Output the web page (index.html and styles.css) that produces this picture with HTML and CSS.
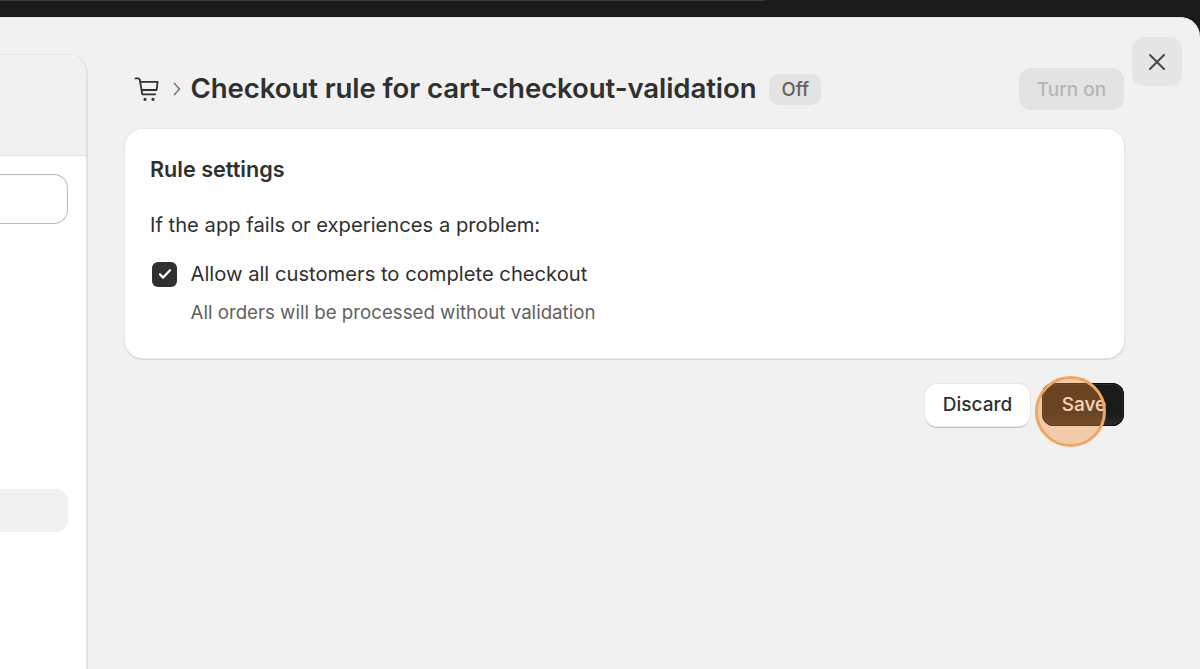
FILE: index.html
```html
<!DOCTYPE html>
<html lang="en">
  <head>
    <meta charset="UTF-8" />
    <meta name="viewport" content="width=device-width, initial-scale=1.0" />
    <title>Checkout rule for cart-checkout-validation</title>
    <link rel="stylesheet" href="styles.css">
  </head>
  <body>
    <div class="top-bar"><div class="top-bar-tab"></div></div>

    <div class="modal">
      <!-- Left panel, cut off by the window -->
      <div class="side-panel">
        <div class="side-card">
          <div class="side-head"></div>
          <div class="side-body">
            <div class="side-input"></div>
            <div class="side-block"></div>
          </div>
        </div>
      </div>

      <!-- Main section -->
      <div class="main-section">
        <div class="page-header">
          <svg class="cart-icon" width="26" height="26" viewBox="0 0 26 26" fill="none" stroke="#303030" stroke-width="1.8" stroke-linecap="round" stroke-linejoin="round">
            <path d="M1.5 2.4h2.6c.9 0 1.5.5 1.7 1.4l2.5 14.5h12.9" />
            <path d="M6.4 5.8h17.2l-1 8.2H7.8" />
            <circle cx="11" cy="23.3" r="0.7" fill="#303030" />
            <circle cx="19" cy="23.3" r="0.7" fill="#303030" />
          </svg>
          <svg class="crumb-arrow" width="8" height="14" viewBox="0 0 8 14" fill="none" stroke="#7a7a7a" stroke-width="1.7" stroke-linecap="round" stroke-linejoin="round">
            <path d="M1.5 1.5 6.5 7l-5 5.5" />
          </svg>
          <h1 class="page-title">Checkout rule for cart-checkout-validation</h1>
          <span class="status-badge">Off</span>
          <button class="turn-on-button" type="button">Turn on</button>
        </div>

        <div class="settings-card">
          <h2 class="card-title">Rule settings</h2>
          <p class="card-label">If the app fails or experiences a problem:</p>
          <div class="check-row">
            <span class="check-box">
              <svg width="14" height="12" viewBox="0 0 14 12" fill="none" stroke="#fff" stroke-width="2.2" stroke-linecap="round" stroke-linejoin="round">
                <path d="M2 6.4 5.2 9.6 12 2.2" />
              </svg>
            </span>
            <span class="check-text">Allow all customers to complete checkout</span>
          </div>
          <p class="check-help">All orders will be processed without validation</p>
        </div>

        <div class="page-actions">
          <button class="discard-button" type="button">Discard</button>
          <button class="save-button" type="button">
            Save
            <span class="click-ring"></span>
          </button>
        </div>

        <button class="close-button" type="button" aria-label="Close">
          <svg width="18" height="18" viewBox="0 0 18 18" fill="none" stroke="#4a4a4a" stroke-width="2.1" stroke-linecap="round">
            <path d="M2 2l14 14M16 2 2 16" />
          </svg>
        </button>
      </div>
    </div>
  </body>
</html>
```

FILE: styles.css
```css
html,
body {
  height: 100%;
}

body {
  font-family: "Inter", sans-serif;
  margin: 0;
  background-color: #1a1a1a;
  color: #303030;
  display: flex;
  flex-direction: column;
  overflow: hidden;
}

.top-bar {
  height: 17px;
  flex-shrink: 0;
}

.top-bar-tab {
  width: 765px;
  height: 1px;
  background-color: #3a3a3a;
  border-bottom-right-radius: 4px;
}

.modal {
  flex: 1;
  display: flex;
  background-color: #f1f1f1;
  border-top-right-radius: 20px;
  box-shadow: inset 0 1px 0 #e4e4e4;
}

/* Left panel */
.side-panel {
  width: 88px;
  flex-shrink: 0;
  padding-top: 37px;
}

.side-card {
  height: 100%;
  background-color: #fff;
  border-top-right-radius: 20px;
  border-top: 1px solid #e6e6e6;
  border-right: 2px solid #e2e2e2;
  box-sizing: border-box;
  display: flex;
  flex-direction: column;
}

.side-head {
  height: 100px;
  background-color: #f1f1f1;
  border-top-right-radius: 20px;
  border-bottom: 1px solid #e3e3e3;
  flex-shrink: 0;
}

.side-body {
  padding: 18px 18px 0 0;
}

.side-input {
  height: 50px;
  background-color: #fdfdfd;
  border: 1px solid #bdbdbd;
  border-left: none;
  border-radius: 0 14px 14px 0;
  box-sizing: border-box;
}

.side-block {
  height: 43px;
  margin-top: 265px;
  background-color: #f1f1f1;
  border-radius: 0 12px 12px 0;
}

/* Main section */
.main-section {
  flex: 1;
  position: relative;
  padding: 51px 76px 0 37px;
}

.page-header {
  height: 42px;
  display: flex;
  align-items: center;
}

.cart-icon {
  margin-left: 9px;
  flex-shrink: 0;
}

.crumb-arrow {
  margin-left: 13px;
  flex-shrink: 0;
}

.page-title {
  margin: 0 0 2px 9.5px;
  font-size: 27.6px;
  font-weight: 600;
  letter-spacing: -0.1px;
  white-space: nowrap;
}

.status-badge {
  margin-left: 13px;
  padding: 0 12px;
  height: 31px;
  line-height: 31px;
  border-radius: 10px;
  background-color: #e3e3e3;
  color: #616161;
  font-size: 18.5px;
  font-weight: 500;
}

.turn-on-button {
  margin-left: auto;
  width: 105px;
  height: 42px;
  border: none;
  border-radius: 12px;
  background-color: #e3e3e3;
  color: #b5b5b5;
  font-family: inherit;
  font-size: 19px;
  font-weight: 500;
}

.settings-card {
  margin-top: 19px;
  height: 229px;
  box-sizing: border-box;
  padding: 27px 25px 0;
  background-color: #fff;
  border-radius: 18px;
  box-shadow: 0 0 0 1px #e8e8e8, 0 1px 1px 1px #d4d4d4;
}

.card-title {
  margin: 0;
  font-size: 21.6px;
  line-height: 27px;
  font-weight: 600;
}

.card-label {
  margin: 28px 0 0;
  font-size: 20.2px;
  line-height: 28px;
}

.check-row {
  margin-top: 21px;
  display: flex;
  align-items: center;
  gap: 13.5px;
  padding-left: 2px;
}

.check-box {
  width: 25px;
  height: 25px;
  border-radius: 6px;
  background-color: #303030;
  display: flex;
  align-items: center;
  justify-content: center;
  flex-shrink: 0;
}

.check-text {
  font-size: 20.2px;
  line-height: 28px;
}

.check-help {
  margin: 11px 0 0 40.5px;
  font-size: 18.7px;
  line-height: 28px;
  color: #616161;
}

.page-actions {
  margin-top: 25px;
  display: flex;
  justify-content: flex-end;
  align-items: center;
  gap: 12px;
}

.discard-button {
  width: 105px;
  height: 42px;
  border: none;
  border-radius: 12px;
  background-color: #fff;
  color: #303030;
  font-family: inherit;
  font-size: 19px;
  font-weight: 550;
  box-shadow: 0 0 0 1px #e6e6e6, 0 2px 0 0 #c4c4c4;
}

.save-button {
  position: relative;
  width: 82px;
  height: 43px;
  border: none;
  border-radius: 12px;
  background: linear-gradient(#1a1a1a 70%, #2e2e2e);
  color: #fff;
  font-family: inherit;
  font-size: 19px;
  font-weight: 550;
  padding-left: 8px;
  box-shadow: inset 0 0 0 1px #0c0c0c, inset 0 0 0 2px #2c2c2c;
}

/* Orange highlight from the recording, sits over the button */
.click-ring {
  position: absolute;
  left: -7px;
  top: -7px;
  width: 71px;
  height: 71px;
  box-sizing: border-box;
  border-radius: 50%;
  border: 3px solid #eda765;
  background-color: rgba(244, 140, 50, 0.37);
}

.close-button {
  position: absolute;
  top: 20px;
  right: 18px;
  width: 50px;
  height: 49px;
  border: none;
  border-radius: 12px;
  background-color: #e6e6e6;
  display: flex;
  align-items: center;
  justify-content: center;
  padding: 0;
}
```
